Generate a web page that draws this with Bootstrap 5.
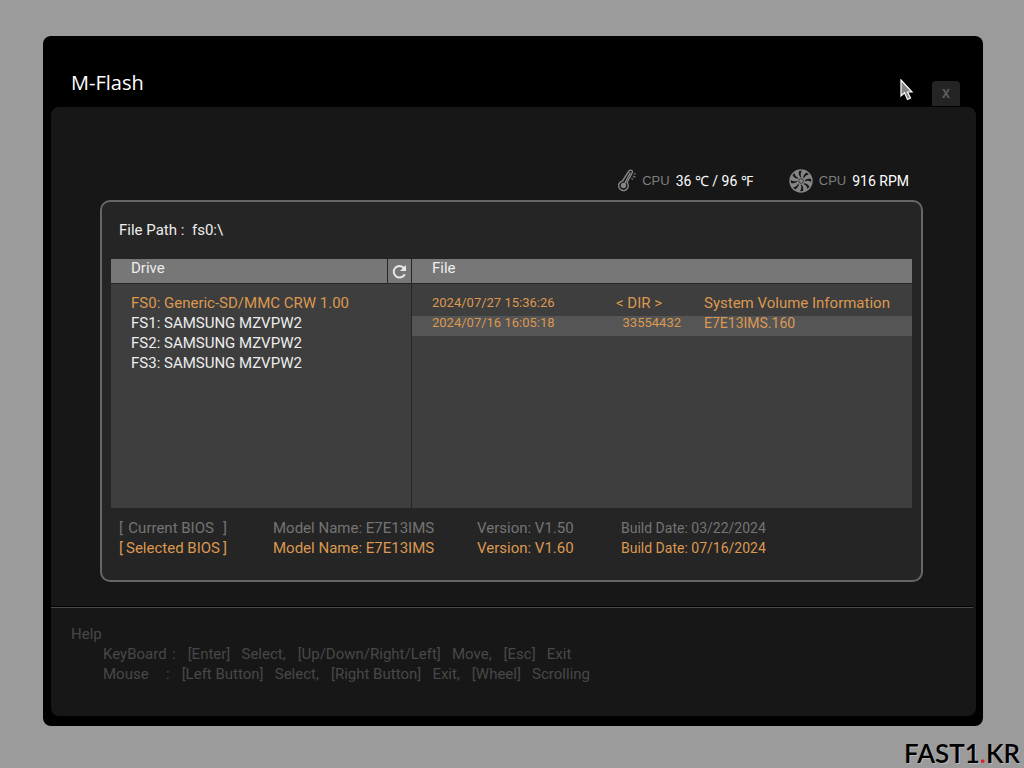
<!DOCTYPE html>
<html lang="en">
<head>
<meta charset="utf-8">
<meta name="viewport" content="width=device-width, initial-scale=1">
<title>M-Flash</title>
<link href="https://cdn.jsdelivr.net/npm/bootstrap@5.3.0/dist/css/bootstrap.min.css" rel="stylesheet">
<style>
  :root { --amber: #dc9850; --panel: #171717; --line: #252525; }
  body { background: #9b9b9b; color: #ededed; font-family: Roboto, "Liberation Sans", sans-serif; font-size: 15px; line-height: 20px; }
  .shell { padding: 36px 0 0; }
  .bios-window { background: #000; border-radius: 8px; margin: 0 41px 0 43px; padding: 0 7px 10px 8px; }
  .title-bar { height: 71px; padding: 0 16px 0 20px; }
  .title-bar h1 { font: 20px/24px "Open Sans", "Noto Sans", sans-serif; color: #fff; margin: 0 0 12px; }
  .close-btn { width: 28px; height: 25px; margin-bottom: 1px; padding: 0; border: 0; border-radius: 4px 4px 0 0; background: #242424; color: #5c5c5c; font: bold 12px/23px "Noto Sans", sans-serif; }
  .pointer { position: absolute; right: 62px; top: 43px; }
  .main-panel { background: var(--panel); border-radius: 8px; }
  .upper { padding: 62px 53px 25px 49px; }
  .sensors { height: 31px; padding-right: 14px; gap: 36px; line-height: 24px; }
  .sensor { gap: 6px; }
  .sensor-label { color: #7e7e7e; font: 13px/24px "Liberation Sans", sans-serif; }
  .sensor-value { color: #fff; font-size: 14px; }
  .browser-box { background: var(--line); border: 2px solid #666; border-radius: 10px; padding: 18px 9px 22px; }
  .path-row { padding-left: 8px; margin-bottom: 19px; }
  .panes { background: #3e3e3e; }
  .drive-pane { width: 301px; border-right: 1px solid var(--line); }
  .pane-head { height: 25px; background: #777; border-bottom: 1px solid var(--line); line-height: 18px; }
  .pane-head h2 { font-size: 15px; line-height: 18px; font-weight: 400; margin: 0; padding-left: 20px; }
  .refresh { width: 24px; padding: 0; border: 0; border-left: 1px solid var(--line); background: #777; color: #e8e8e8; }
  .pane-list { height: 224px; padding-top: 12px; }
  .drive { display: block; width: 100%; height: 20px; line-height: 14px; padding: 0 0 6px 20px; border: 0; background: none; color: #ededed; text-align: left; white-space: nowrap; }
  .drive.current, .files { color: var(--amber); }
  .files { width: 100%; table-layout: fixed; }
  .files td { height: 20px; line-height: 14px; padding: 0 0 6px; white-space: nowrap; }
  .files .on { background: #555; }
  .files .when { width: 204px; padding-left: 20px; }
  .files .size { width: 88px; padding-right: 23px; }
  .when, .num { font-size: 13px; }
  .code { font-size: 14px; }
  .versions { margin: 10px 0 0 8px; color: #747474; }
  .versions td { padding: 0; white-space: pre; }
  .versions .picked td { color: var(--amber); }
  .label-col { width: 154px; }
  .model-col { width: 204px; }
  .version-col { width: 144px; }
  .tag { width: 108px; }
  .help { border-top: 1px solid #4a4a4a; box-shadow: 0 -1px #000; margin-right: 3px; padding: 16px 17px 31px 20px; color: #484848; }
  .help dl { margin: 0 0 0 32px; }
  .help dt { font-weight: 400; width: 69px; }
  .help dt.mouse { width: 63px; }
  .help dd { margin: 0 12px 0 0; white-space: pre; }
  .watermark { padding: 12px 4px 0 0; font: 600 26px/30px Lato, sans-serif; color: #000; text-shadow: 1px 1px #b8b8b8; }
  .watermark span { color: #e0202c; text-shadow: none; }
</style>
</head>
<body>
<div class="shell min-vh-100 d-flex flex-column">
  <main class="bios-window flex-grow-1 d-flex flex-column">
    <header class="title-bar position-relative d-flex justify-content-between align-items-end">
      <h1>M-Flash</h1>
      <button class="close-btn" type="button" aria-label="Close">X</button>
      <svg class="pointer" width="15" height="22" viewBox="0 0 15 22" aria-hidden="true"><path d="M2 1V17L5.500 13.800L8.500 20.500L11.500 19L8.500 13H13Z" fill="#858585" stroke="#fff" stroke-width="1.200"/></svg>
    </header>
    <div class="main-panel flex-grow-1 d-flex flex-column">
      <section class="upper">
        <div class="sensors d-flex justify-content-end">
          <div class="sensor d-flex">
            <svg width="18" height="24" viewBox="0 0 18 24" fill="none" stroke="#858585" aria-hidden="true"><path d="M4.500 12L11 1.800Q12.500.5 14 1.700Q15 2.700 14 4.200L9 13.500A4.800 4.800 0 1 1 4.500 12Z" stroke-width="1.400"/><path d="M12.300 3.500L6.500 15" stroke-width="1.400"/><circle cx="5.500" cy="16.500" r="2.700" fill="#858585" stroke="none"/><path d="M16 4.500l1.500.8M15 7l2.500 1.200M13.500 9.500l1.500.8" stroke-width="1.200"/></svg>
            <span class="sensor-label">CPU</span>
            <span class="sensor-value">36 ℃ / 96 ℉</span>
          </div>
          <div class="sensor d-flex">
            <svg width="24" height="24" viewBox="-12 -12 24 24" aria-hidden="true"><circle r="11.700" fill="#858585"/><g fill="#171717"><path id="gap" d="M-.6 -3.800C-2.200 -5.500 -2.700 -7.500 -1.900 -10L1 -10.200C-.6 -8 -.6 -6 .3 -3.800Z"/><use href="#gap" transform="rotate(45)"/><use href="#gap" transform="rotate(90)"/><use href="#gap" transform="rotate(135)"/><use href="#gap" transform="rotate(180)"/><use href="#gap" transform="rotate(225)"/><use href="#gap" transform="rotate(270)"/><use href="#gap" transform="rotate(315)"/></g><circle r="2.300" fill="none" stroke="#333" stroke-width=".9"/></svg>
            <span class="sensor-label">CPU</span>
            <span class="sensor-value">916 RPM</span>
          </div>
        </div>
        <div class="browser-box">
          <div class="path-row">File Path :&ensp;fs0:\</div>
          <div class="panes d-flex">
            <section class="drive-pane flex-shrink-0">
              <div class="pane-head d-flex justify-content-between">
                <h2>Drive</h2>
                <button class="refresh" type="button" aria-label="Refresh drives"><svg width="16" height="16" viewBox="0 0 16 16" aria-hidden="true"><path d="M12 4A5.800 5.800 0 1 0 12.800 10.200" fill="none" stroke="currentColor" stroke-width="2"/><path d="M14 1V7H8Z" fill="currentColor"/></svg></button>
              </div>
              <div class="pane-list">
                <button class="drive current" type="button">FS0: Generic-SD/MMC CRW 1.00</button>
                <button class="drive" type="button">FS1: SAMSUNG MZVPW2</button>
                <button class="drive" type="button">FS2: SAMSUNG MZVPW2</button>
                <button class="drive" type="button">FS3: SAMSUNG MZVPW2</button>
              </div>
            </section>
            <section class="flex-grow-1">
              <div class="pane-head"><h2>File</h2></div>
              <div class="pane-list">
                <table class="files">
                  <tr><td class="when">2024/07/27 15:36:26</td><td class="size">&lt; DIR &gt;</td><td>System Volume Information</td></tr>
                  <tr class="on"><td class="when">2024/07/16 16:05:18</td><td class="size num text-end">33554432</td><td class="code">E7E13IMS.160</td></tr>
                </table>
              </div>
            </section>
          </div>
          <table class="versions">
            <colgroup><col class="label-col"><col class="model-col"><col class="version-col"><col></colgroup>
            <tr><td><div class="tag d-flex justify-content-between"><span>[</span><span>Current BIOS </span><span>]</span></div></td><td>Model Name: E7E13IMS</td><td>Version: V1.50</td><td class="code">Build Date: 03/22/2024</td></tr>
            <tr class="picked"><td><div class="tag d-flex justify-content-between"><span>[</span><span>Selected BIOS</span><span>]</span></div></td><td>Model Name: E7E13IMS</td><td>Version: V1.60</td><td class="code">Build Date: 07/16/2024</td></tr>
          </table>
        </div>
      </section>
      <section class="help">
        <div>Help</div>
        <dl>
          <div class="d-flex"><dt>KeyBoard</dt><dd>:</dd><dd>[Enter]   Select,</dd><dd>[Up/Down/Right/Left]   Move,</dd><dd>[Esc]   Exit</dd></div>
          <div class="d-flex"><dt class="mouse">Mouse</dt><dd>:</dd><dd>[Left Button]   Select,</dd><dd>[Right Button]   Exit,</dd><dd>[Wheel]   Scrolling</dd></div>
        </dl>
      </section>
    </div>
  </main>
  <footer class="d-flex justify-content-end"><div class="watermark">FAST1<span>.</span>KR</div></footer>
</div>
<script src="https://cdn.jsdelivr.net/npm/bootstrap@5.3.0/dist/js/bootstrap.bundle.min.js"></script>
</body>
</html>
